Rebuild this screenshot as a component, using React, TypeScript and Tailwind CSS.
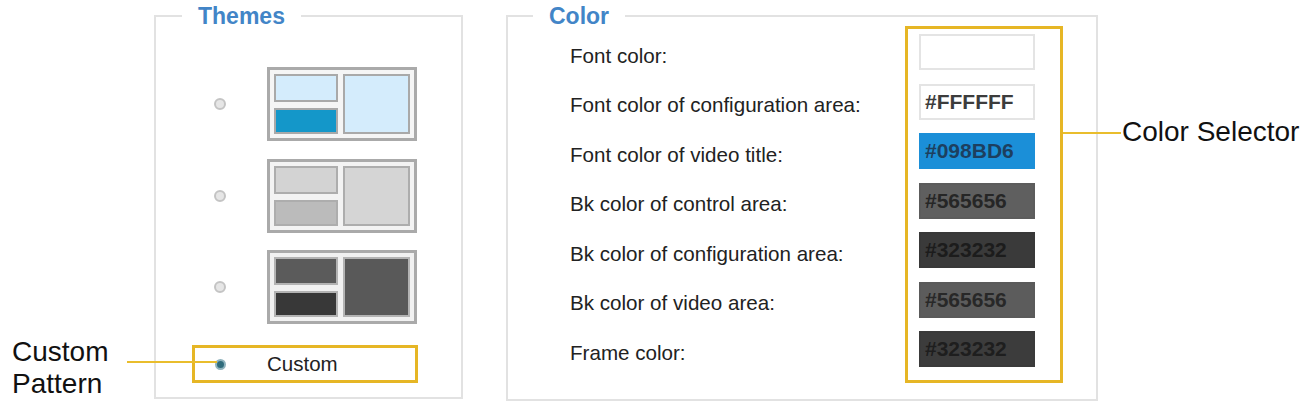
import React from "react";

interface ThemeSwatch {
  frame: string;
  tl: string;
  bl: string;
  right: string;
  pane: string;
}

const themes: ThemeSwatch[] = [
  {frame: "bg-[#f5f5f5]", tl: "bg-[#d4ecfc]", bl: "bg-[#1497c9]", right: "bg-[#d4ecfc]", pane: "border-[#a9a9a9]"},
  {frame: "bg-[#f3f3f3]", tl: "bg-[#d3d3d3]", bl: "bg-[#bbbbbb]", right: "bg-[#d5d5d5]", pane: "border-[#adadad]"},
  {frame: "bg-[#f1f1f1]", tl: "bg-[#5b5b5b]", bl: "bg-[#383838]", right: "bg-[#595959]", pane: "border-[#b3b3b3]"},
];

const fields = [
  {label: "Font color:", value: "", box: "bg-white border-[#e4e4e4]", text: "text-[#444444]"},
  {label: "Font color of configuration area:", value: "#FFFFFF", box: "bg-white border-[#e4e4e4]", text: "text-[#3c3c3c]"},
  {label: "Font color of video title:", value: "#098BD6", box: "bg-[#1b8fd8] border-[#1b8fd8]", text: "text-[#1d3f5f]"},
  {label: "Bk color of control area:", value: "#565656", box: "bg-[#5f5f5f] border-[#5c5c5c]", text: "text-[#262626]"},
  {label: "Bk color of configuration area:", value: "#323232", box: "bg-[#3a3a3a] border-[#383838]", text: "text-[#1c1c1c]"},
  {label: "Bk color of video area:", value: "#565656", box: "bg-[#5c5c5c] border-[#5a5a5a]", text: "text-[#282828]"},
  {label: "Frame color:", value: "#323232", box: "bg-[#3c3c3c] border-[#3a3a3a]", text: "text-[#1e1e1e]"},
];

const Radio: React.FC<{checked?: boolean}> = ({checked}) => (
  <span
    className={
      checked
        ? "block w-[11px] h-[11px] rounded-full border-2 border-[#8fb3bd] bg-[#2f6c7c]"
        : "block w-[12px] h-[12px] rounded-full border-2 border-[#c4c4c4] bg-[#e6e6e6]"
    }
  />
);

const Thumb: React.FC<{t: ThemeSwatch}> = ({t}) => (
  <div className={`flex gap-[5px] w-[150px] h-[74px] p-[4px] border-[3px] border-[#aaaaaa] ${t.frame}`}>
    <div className="flex flex-col gap-[6px] w-[64px]">
      <div className={`h-[28px] border-2 ${t.pane} ${t.tl}`} />
      <div className={`flex-1 border-2 ${t.pane} ${t.bl}`} />
    </div>
    <div className={`flex-1 border-2 ${t.pane} ${t.right}`} />
  </div>
);

const PanelTitle: React.FC<{text: string; ml: string}> = ({text, ml}) => (
  <div className={`flex -mt-[13px] h-[24px] ${ml}`}>
    <span className="bg-white px-[16px] text-[23px] leading-[24px] font-bold text-[#4285c7]">{text}</span>
  </div>
);

const App: React.FC = () => {
  return (
    <div className="relative flex w-[1309px] h-[406px] bg-white font-['Liberation_Sans',Arial,sans-serif] text-[#222222]">
      {/* left callout */}
      <div className="w-[154px] shrink-0 pt-[336px] pl-[12px] text-[28px] leading-[32px] text-[#111]">
        <div>Custom</div>
        <div>Pattern</div>
      </div>

      {/* themes */}
      <div className="mt-[15px] w-[309px] h-[384px] shrink-0 border-2 border-[#e2e2e2]">
        <PanelTitle text="Themes" ml="ml-[26px]" />
        <div className="flex flex-col pl-[36px] pt-[39px]">
          <div className="flex flex-col gap-[17.5px]">
            {themes.map((t, i) => (
              <div key={i} className="flex items-center pl-[22px] gap-[41px]">
                <Radio />
                <Thumb t={t} />
              </div>
            ))}
          </div>
          <div className="mt-[21px] flex items-center w-[226px] h-[38px] border-[3px] border-[#e6b625] pl-[20px] gap-[41px]">
            <Radio checked />
            <span className="text-[20.5px]">Custom</span>
          </div>
        </div>
      </div>

      {/* color */}
      <div className="ml-[43px] mt-[15px] w-[592px] h-[386px] shrink-0 border-2 border-[#e2e2e2]">
        <PanelTitle text="Color" ml="ml-[25px]" />
        <div className="flex pl-[62px]">
          <div className="flex flex-col gap-[13.5px] w-[335px] pt-[10px]">
            {fields.map((f) => (
              <div key={f.label} className="flex items-center h-[36px] text-[20.6px]">
                {f.label}
              </div>
            ))}
          </div>
          <div className="-mt-[2px] flex flex-col gap-[13.5px] w-[158px] h-[357px] border-[3px] border-[#e6b625] pt-[5px] pl-[11px]">
            {fields.map((f) => (
              <div
                key={f.label}
                className={`flex items-center w-[116px] h-[36px] border-2 pl-[4px] text-[21px] font-bold ${f.box} ${f.text}`}
              >
                {f.value}
              </div>
            ))}
          </div>
        </div>
      </div>

      {/* right callout */}
      <div className="flex-1 pl-[24px] pt-[116px]">
        <span className="text-[28px] leading-[32px] text-[#111]">Color Selector</span>
      </div>

      {/* callout lines */}
      <div className="absolute left-[127px] top-[361px] w-[90px] h-[2px] bg-[#e9bd2c]" />
      <div className="absolute left-[1063px] top-[132px] w-[58px] h-[2px] bg-[#e9bd2c]" />
    </div>
  );
};

export default App;
